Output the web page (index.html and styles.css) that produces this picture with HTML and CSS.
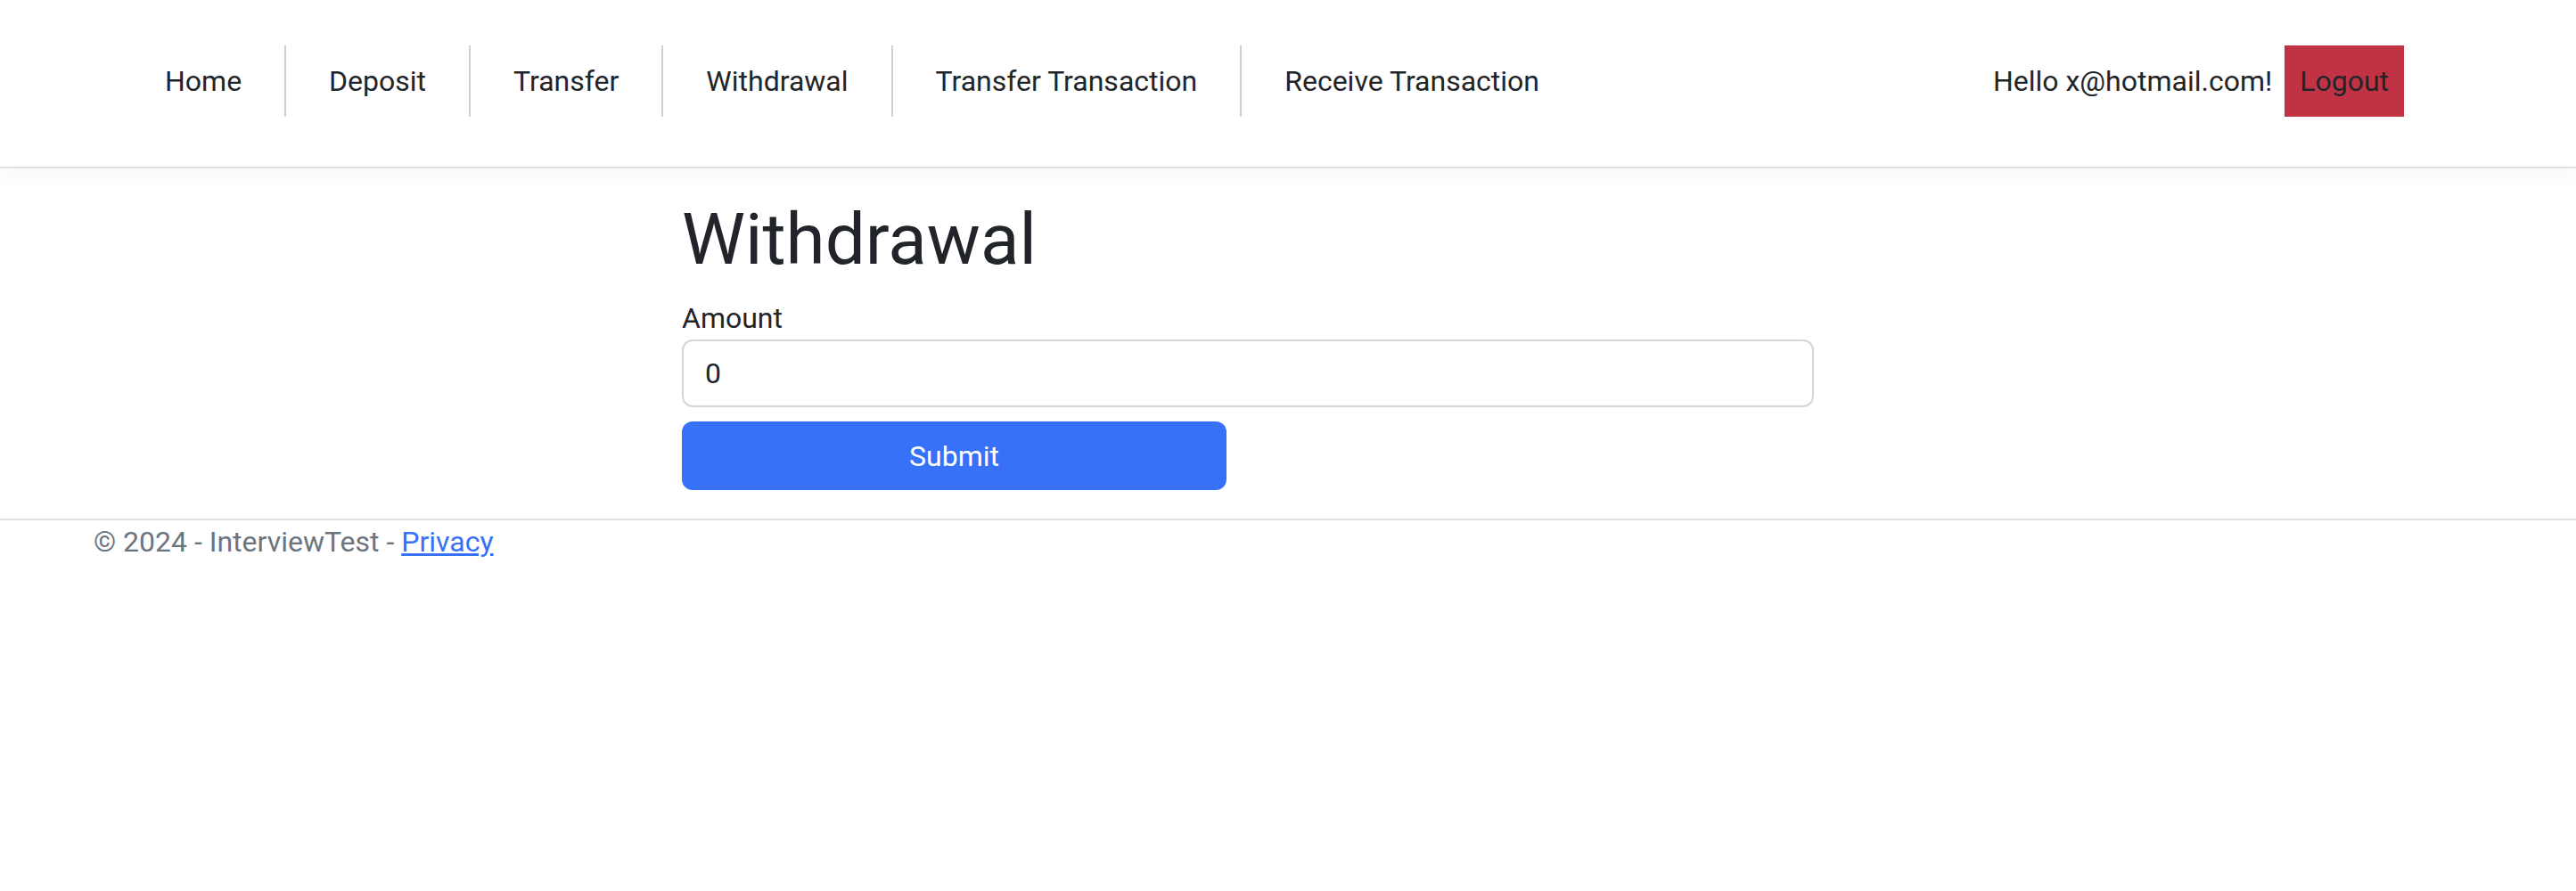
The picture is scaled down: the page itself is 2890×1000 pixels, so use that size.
FILE: index.html
```html
<!DOCTYPE html>
<html lang="en">
<head>
<meta charset="utf-8">
<title>Withdrawal - InterviewTest</title>
<link rel="stylesheet" href="styles.css">
</head>
<body>
<header class="navbar">
  <nav class="nav-main">
    <a class="nav-link" href="#">Home</a>
    <a class="nav-link" href="#">Deposit</a>
    <a class="nav-link" href="#">Transfer</a>
    <a class="nav-link" href="#">Withdrawal</a>
    <a class="nav-link" href="#">Transfer Transaction</a>
    <a class="nav-link" href="#">Receive Transaction</a>
  </nav>
  <div class="nav-user">
    <span class="hello">Hello x@hotmail.com!</span>
    <button class="logout" type="button">Logout</button>
  </div>
</header>
<main class="main">
  <h1 class="title">Withdrawal</h1>
  <form class="form">
    <label class="label" for="amount">Amount</label>
    <input class="input" id="amount" type="text" value="0">
    <button class="submit" type="button">Submit</button>
  </form>
</main>
<footer class="footer">
  &copy; 2024 - InterviewTest - <a class="privacy" href="#">Privacy</a>
</footer>
</body>
</html>
```
FILE: styles.css
```css
* { box-sizing: border-box; }
html, body { margin: 0; padding: 0; }
body {
  font-family: Roboto, "Liberation Sans", Arial, sans-serif;
  font-size: 32px;
  line-height: 48px;
  color: #212529;
  background: #fff;
  width: 2890px;
}
.navbar {
  display: flex;
  justify-content: space-between;
  align-items: center;
  padding: 51px 193px 56px 135px;
  border-bottom: 2px solid #dee2e6;
  box-shadow: 0 8px 24px rgba(0, 0, 0, 0.03);
  margin-bottom: 32px;
}
.nav-main { display: flex; }
.nav-link {
  display: block;
  padding: 16px 48px;
  color: #212529;
  text-decoration: none;
  border-right: 2px solid #cfcfcf;
}
.nav-link:first-child { padding-left: 50px; }
.nav-link:last-child { border-right: none; }
.nav-user { display: flex; align-items: center; }
.hello { padding: 16px 14px 16px 16px; }
.logout {
  font: inherit;
  line-height: 48px;
  padding: 16px 17px;
  border: none;
  border-radius: 0;
  background: #c13344;
  color: #212529;
}
.main {
  margin-left: 765px;
  width: 1270px;
  padding-bottom: 32px;
}
.title {
  margin: 0 0 16px 0;
  font-size: 80px;
  line-height: 96px;
  font-weight: 400;
  color: #212529;
}
.form { display: flex; flex-direction: column; align-items: flex-start; }
.label { display: block; }
.input {
  display: block;
  width: 100%;
  height: 76px;
  padding: 12px 24px;
  font: inherit;
  line-height: 48px;
  color: #212529;
  border: 2px solid #d3d6db;
  border-radius: 12px;
  margin-bottom: 16px;
}
.submit {
  width: 611px;
  height: 77px;
  font: inherit;
  line-height: 48px;
  color: #fff;
  background: #3771f8;
  border: none;
  border-radius: 12px;
}
.footer {
  border-top: 2px solid #dee2e6;
  padding-left: 105px;
  color: #6c757d;
  line-height: 48px;
}
.privacy { color: #3771f8; text-decoration: underline; }
```
